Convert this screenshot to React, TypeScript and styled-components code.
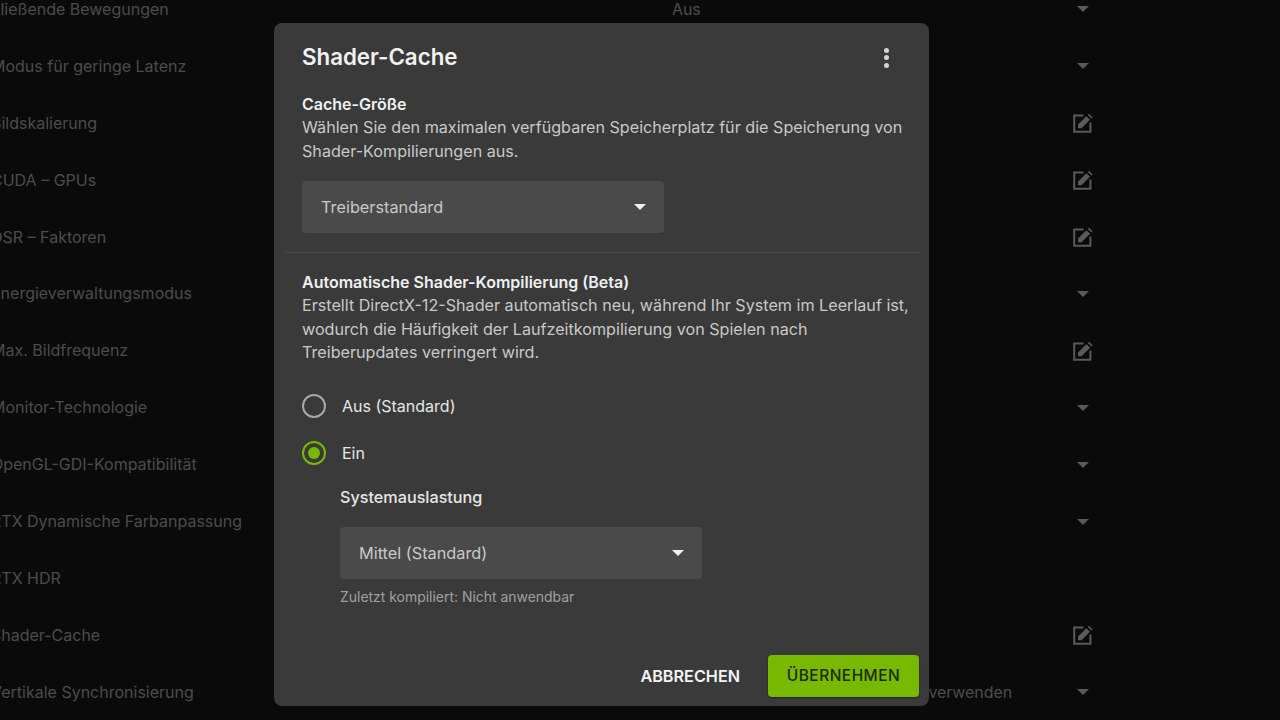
import styled, { createGlobalStyle } from 'styled-components';

interface SettingRow {
  label: string;
  value?: string;
  control?: 'arrow' | 'edit';
}

const settings: SettingRow[] = [
  { label: 'Fließende Bewegungen', value: 'Aus', control: 'arrow' },
  { label: 'Modus für geringe Latenz', control: 'arrow' },
  { label: 'Bildskalierung', control: 'edit' },
  { label: 'CUDA – GPUs', control: 'edit' },
  { label: 'DSR – Faktoren', control: 'edit' },
  { label: 'Energieverwaltungsmodus', control: 'arrow' },
  { label: 'Max. Bildfrequenz', control: 'edit' },
  { label: 'Monitor-Technologie', control: 'arrow' },
  { label: 'OpenGL-GDI-Kompatibilität', control: 'arrow' },
  { label: 'RTX Dynamische Farbanpassung', control: 'arrow' },
  { label: 'RTX HDR' },
  { label: 'Shader-Cache', control: 'edit' },
  {
    label: 'Vertikale Synchronisierung',
    value: 'Einstellungen der 3D-Anwendung verwenden',
    control: 'arrow',
  },
];

function EditIcon() {
  return (
    <svg width="20" height="20" viewBox="0 0 20 20" fill="none">
      <path d="M10.5 2.6H1.2v16.2h16.2V9.6" stroke="currentColor" strokeWidth="2" />
      <path d="M5 15.2v-3.6L13.4 3.2l3.6 3.6-8.4 8.4z" fill="currentColor" />
      <path d="M14.8 1.9L16 .7l3.6 3.6-1.2 1.2z" fill="currentColor" />
    </svg>
  );
}

function App() {
  return (
    <>
      <GlobalStyle />
      <Page>
        <SettingsList>
          {settings.map((row) => (
            <Row key={row.label}>
              <RowLabel>{row.label}</RowLabel>
              <RowValue>{row.value}</RowValue>
              <RowControl>
                {row.control === 'arrow' && <Arrow $color="#5a5a5a" />}
                {row.control === 'edit' && <EditIcon />}
              </RowControl>
            </Row>
          ))}
        </SettingsList>
        <Dialog>
          <DialogHeader>
            <DialogTitle>Shader-Cache</DialogTitle>
            <MoreButton>
              <Dot />
              <Dot />
              <Dot />
            </MoreButton>
          </DialogHeader>
          <Section>
            <SectionTitle>Cache-Größe</SectionTitle>
            <Description>
              Wählen Sie den maximalen verfügbaren Speicherplatz für die Speicherung von
              <br />
              Shader-Kompilierungen aus.
            </Description>
            <Select>
              Treiberstandard
              <Arrow $color="#f0f0f0" />
            </Select>
          </Section>
          <Divider />
          <Section>
            <SectionTitle>Automatische Shader-Kompilierung (Beta)</SectionTitle>
            <Description>
              Erstellt DirectX-12-Shader automatisch neu, während Ihr System im Leerlauf ist,
              <br />
              wodurch die Häufigkeit der Laufzeitkompilierung von Spielen nach
              <br />
              Treiberupdates verringert wird.
            </Description>
            <RadioGroup>
              <RadioRow>
                <Radio />
                Aus (Standard)
              </RadioRow>
              <RadioRow>
                <Radio $checked />
                Ein
              </RadioRow>
            </RadioGroup>
            <SubOptions>
              <SubTitle>Systemauslastung</SubTitle>
              <Select>
                Mittel (Standard)
                <Arrow $color="#f0f0f0" />
              </Select>
              <Hint>Zuletzt kompiliert: Nicht anwendbar</Hint>
            </SubOptions>
          </Section>
          <Footer>
            <CancelButton>ABBRECHEN</CancelButton>
            <ApplyButton>ÜBERNEHMEN</ApplyButton>
          </Footer>
        </Dialog>
      </Page>
    </>
  );
}

export default App;

const GlobalStyle = createGlobalStyle`
  html, body {
    margin: 0;
    height: 100%;
    background: #0a0a0a;
  }
  body {
    font-family: Inter, "Noto Sans", "Liberation Sans", sans-serif;
    overflow: hidden;
  }
`;

const Page = styled.div`
  position: relative;
  width: 1280px;
  height: 720px;
  overflow: hidden;
  background: #0a0a0a;
`;

const SettingsList = styled.div`
  display: flex;
  flex-direction: column;
  margin: -19px 0 0 -9px;
`;

const Row = styled.div`
  display: grid;
  grid-template-columns: 681px 389px 44px;
  align-items: center;
  height: 56.92px;
  color: #4c4c4c;
  font-size: 16px;
  white-space: nowrap;
`;

const RowLabel = styled.div`
  margin-top: -1px;
`;

const RowValue = styled.div`
  margin-top: -1px;
  letter-spacing: -0.07px;
`;

const RowControl = styled.div`
  display: flex;
  justify-content: center;
  color: #5a5a5a;
`;

const Arrow = styled.span<{ $color: string }>`
  width: 0;
  height: 0;
  border-left: 6px solid transparent;
  border-right: 6px solid transparent;
  border-top: 6px solid ${(p) => p.$color};
`;

const Dialog = styled.div`
  position: absolute;
  left: 274px;
  top: 23px;
  box-sizing: border-box;
  display: flex;
  flex-direction: column;
  width: 655px;
  height: 683px;
  padding: 0 10px 0 11px;
  background: #3a3a3a;
  border-radius: 8px;
  color: #c8c8c8;
`;

const DialogHeader = styled.div`
  display: flex;
  align-items: center;
  justify-content: space-between;
  height: 69px;
  margin-bottom: 1px;
  padding: 0 30px 2px 17px;
  box-sizing: border-box;
`;

const DialogTitle = styled.h2`
  margin: 0;
  color: #f2f2f2;
  font-size: 22.3px;
  font-weight: 600;
`;

const MoreButton = styled.div`
  display: flex;
  flex-direction: column;
  gap: 2.5px;
  margin-top: 2px;
`;

const Dot = styled.span`
  width: 5px;
  height: 5px;
  border-radius: 50%;
  background: #d4d4d4;
`;

const Section = styled.div`
  padding: 0 0 0 17px;
`;

const SectionTitle = styled.div`
  color: #f0f0f0;
  font-size: 16px;
  font-weight: 600;
  line-height: 23px;
`;

const Description = styled.div`
  font-size: 16.15px;
  line-height: 23.5px;
  white-space: nowrap;
`;

const Select = styled.div`
  box-sizing: border-box;
  display: flex;
  align-items: center;
  justify-content: space-between;
  width: 362px;
  height: 52px;
  margin-top: 18px;
  padding: 0 18px 0 19px;
  background: #4a4a4a;
  border-radius: 4px;
  font-size: 16.3px;
`;

const Divider = styled.div`
  height: 1px;
  margin: 19px 0 18px;
  background: #4c4c4c;
`;

const RadioGroup = styled.div`
  display: flex;
  flex-direction: column;
  gap: 23px;
  margin-top: 29px;
`;

const RadioRow = styled.div`
  display: flex;
  align-items: center;
  gap: 16px;
  height: 24px;
  color: #e6e6e6;
  font-size: 16px;
`;

const Radio = styled.span<{ $checked?: boolean }>`
  box-sizing: border-box;
  display: flex;
  align-items: center;
  justify-content: center;
  width: 24px;
  height: 24px;
  border: 2px solid ${(p) => (p.$checked ? '#76b900' : '#a8a8a8')};
  border-radius: 50%;

  &::after {
    content: '';
    display: ${(p) => (p.$checked ? 'block' : 'none')};
    width: 12px;
    height: 12px;
    border-radius: 50%;
    background: #76b900;
  }
`;

const SubOptions = styled.div`
  margin: 21px 0 0 38px;
`;

const SubTitle = styled.div`
  margin-bottom: 1px;
  color: #e6e6e6;
  font-size: 16.2px;
  font-weight: 500;
  line-height: 23px;
`;

const Hint = styled.div`
  margin-top: 9px;
  color: #a0a0a0;
  font-size: 13.95px;
  line-height: 18px;
`;

const Footer = styled.div`
  display: flex;
  align-items: center;
  justify-content: flex-end;
  gap: 28px;
  margin-top: auto;
  padding-bottom: 9px;
`;

const CancelButton = styled.div`
  margin-top: -1px;
  color: #f4f4f4;
  font-size: 16.2px;
  font-weight: 600;
`;

const ApplyButton = styled.div`
  box-sizing: border-box;
  display: flex;
  align-items: center;
  justify-content: center;
  width: 151px;
  height: 42px;
  padding-bottom: 2px;
  background: #76b900;
  border-radius: 4px;
  box-shadow: 0 1px 2px rgba(0, 0, 0, 0.4);
  color: #1c2a00;
  font-size: 15.5px;
  font-weight: 500;
  letter-spacing: 0.45px;
`;
